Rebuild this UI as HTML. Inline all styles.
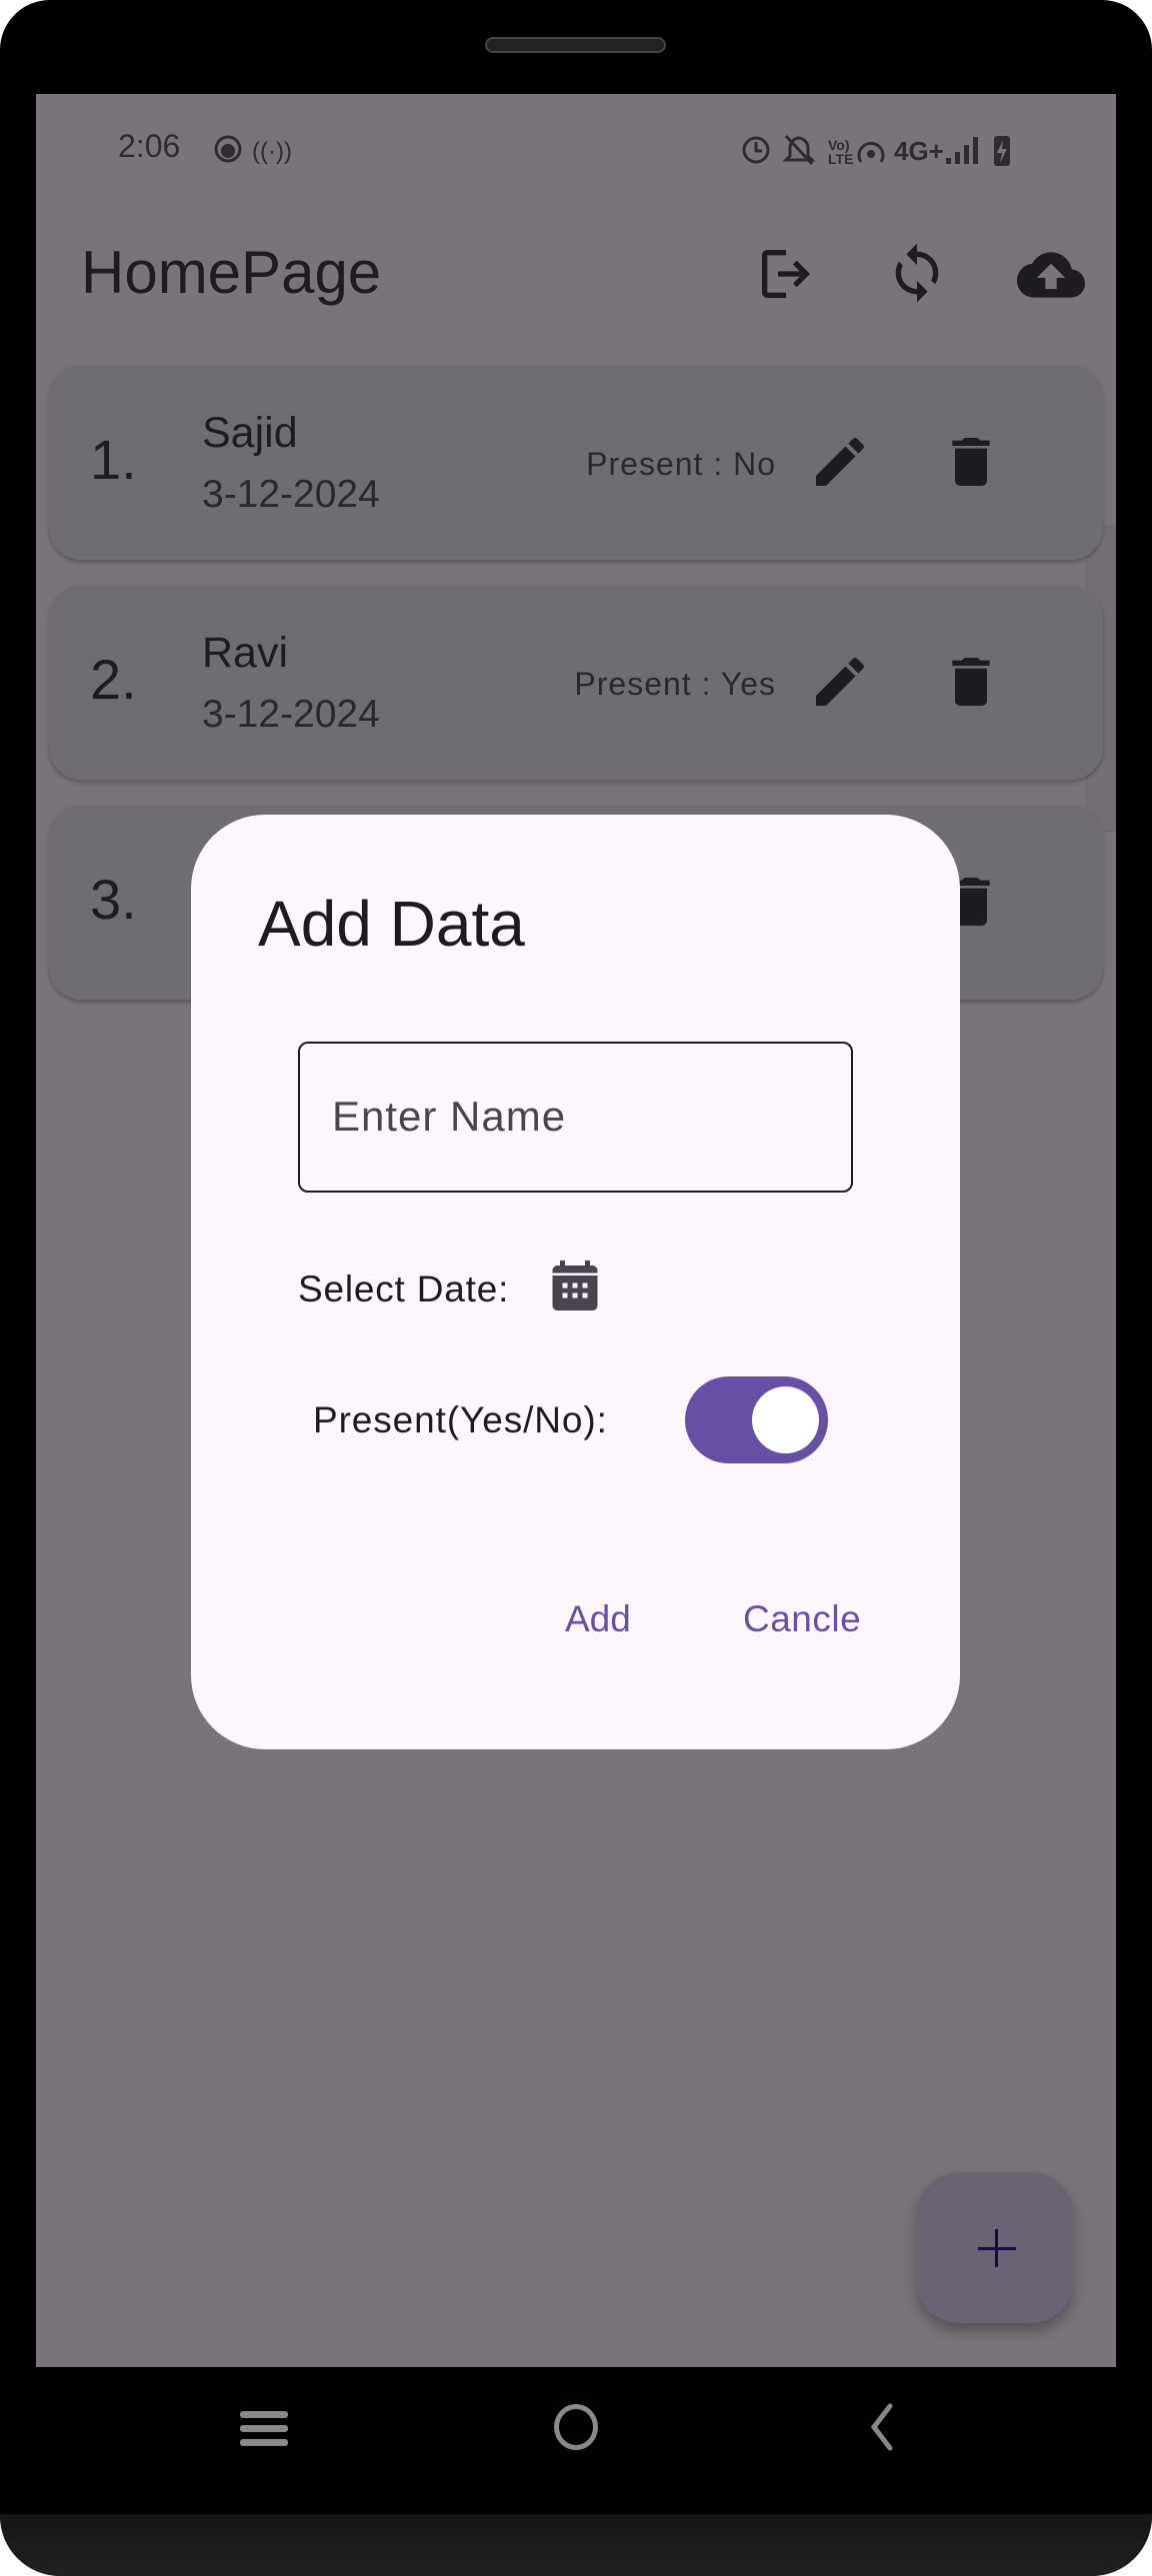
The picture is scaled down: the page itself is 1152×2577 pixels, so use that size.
<!DOCTYPE html>
<html><head><meta charset="utf-8"><style>
*{margin:0;padding:0;box-sizing:border-box}
body{width:1152px;height:2577px;background:#fff;font-family:"Liberation Sans",Roboto,sans-serif;position:relative;overflow:hidden}
.phone{position:absolute;left:0;top:0;width:1152px;height:2577px;background:#000;border-radius:50px 50px 60px 60px;overflow:hidden}
.chin{position:absolute;left:0;top:2515px;width:1152px;height:62px;background:linear-gradient(#141414,#222);border-radius:0 0 60px 60px}
.spk{position:absolute;left:485px;top:37px;width:181px;height:16px;border-radius:8px;background:#222;border:2px solid #444}
.screen{position:absolute;left:36px;top:94px;width:1080px;height:2274px;background:#79747a;overflow:hidden}
.a{position:absolute}
.card{position:absolute;left:13px;width:1054px;height:195px;background:#706d72;border-radius:33px;box-shadow:0 3px 4px rgba(0,0,0,.25)}
.num{position:absolute;left:41px;font-size:56px;color:#1e1c21}
.nm{position:absolute;left:153px;font-size:43px;color:#1e1c21}
.dt{position:absolute;left:153px;font-size:39px;color:#2a282d}
.pr{position:absolute;font-size:32px;color:#2a282d;letter-spacing:1px}
.dlg{position:absolute;left:191px;top:815px;width:769px;height:935px;background:#fdf7fd;border-radius:74px}
.t{position:absolute;white-space:nowrap}
</style></head><body>
<div class="phone">
<div class="spk"></div>
<div class="screen">
 <div class="t" style="left:82px;top:34px;font-size:32px;color:#2e2c30">2:06</div>
 <svg class="a" style="left:174px;top:38px" width="110" height="34"><circle cx="18" cy="17" r="12" fill="none" stroke="#2e2c30" stroke-width="3"/><circle cx="18" cy="19" r="7" fill="#2e2c30"/><text x="42" y="27" font-size="24" fill="#2e2c30" font-family="Liberation Sans">((·))</text></svg>
 <svg class="a" style="left:700px;top:34px" width="340" height="40" fill="#2e2c30" font-family="Liberation Sans">
  <circle cx="20" cy="22" r="12" fill="none" stroke="#2e2c30" stroke-width="3"/><path d="M20 14v9h6" stroke="#2e2c30" stroke-width="3" fill="none"/>
  <path d="M62 10a10 10 0 0 1 10 10v8l4 4H50l4-4v-8a10 10 0 0 1 8-10z" fill="none" stroke="#2e2c30" stroke-width="3"/><path d="M50 8l26 28" stroke="#2e2c30" stroke-width="3"/>
  <text x="92" y="22" font-size="14" font-weight="bold">Vo)</text><text x="92" y="36" font-size="14" font-weight="bold">LTE</text>
  <path d="M125 34a12 12 0 1 1 20 0" fill="none" stroke="#2e2c30" stroke-width="3"/><circle cx="135" cy="26" r="4"/>
  <text x="158" y="32" font-size="26" font-weight="bold">4G+</text>
  <rect x="210" y="30" width="5" height="6"/><rect x="219" y="24" width="5" height="12"/><rect x="228" y="17" width="5" height="19"/><rect x="237" y="9" width="5" height="27"/>
  <rect x="258" y="8" width="16" height="30" rx="3"/><path d="M267 12l-6 13h5l-2 10 7-14h-5z" fill="#79747a"/>
 </svg>
 <div class="t" style="left:45px;top:144px;font-size:60px;color:#1e1c21">HomePage</div>
 <svg class="a" style="left:718px;top:148px" width="64" height="64" viewBox="0 0 24 24" fill="#1e1c21"><path d="M5 21c-.55 0-1.02-.2-1.41-.59S3 19.55 3 19V5c0-.55.2-1.02.59-1.41S4.45 3 5 3h7v2H5v14h7v2H5zm11-4l-1.38-1.45 2.55-2.55H9v-2h8.17l-2.55-2.55L16 7l5 5-5 5z"/></svg>
 <svg class="a" style="left:849px;top:147px" width="64" height="64" viewBox="0 0 24 24" fill="#1e1c21"><path d="M12 4V1L8 5l4 4V6c3.31 0 6 2.69 6 6 0 1.01-.25 1.970-.7 2.8l1.46 1.46C19.54 15.03 20 13.570 20 12c0-4.42-3.58-8-8-8zm0 14c-3.31 0-6-2.69-6-6 0-1.01.25-1.97.7-2.8L5.24 7.74C4.46 8.97 4 10.43 4 12c0 4.42 3.58 8 8 8v3l4-4-4-4v3z"/></svg>
 <svg class="a" style="left:981px;top:147px" width="68" height="68" viewBox="0 0 24 24" fill="#1e1c21"><path d="M19.35 10.04C18.67 6.59 15.64 4 12 4 9.11 4 6.6 5.64 5.35 8.04 2.34 8.36 0 10.91 0 14c0 3.31 2.690 6 6 6h13c2.76 0 5-2.24 5-5 0-2.64-2.05-4.78-4.650-4.96zM14 13v4h-4v-4H7l5-5 5 5h-3z"/></svg>

 <div class="a" style="left:1050px;top:432px;width:30px;height:306px;border:1px solid #6c696e;border-right:none;border-radius:16px 0 0 16px;background:#736f75"></div>

 <div class="card" style="top:271px">
  <div class="num" style="top:62px">1.</div>
  <div class="nm" style="top:44px">Sajid</div>
  <div class="dt" style="top:108px">3-12-2024</div>
  <div class="pr" style="right:327px;top:81px">Present : No</div>
 </div>
 <div class="card" style="top:491px">
  <div class="num" style="top:62px">2.</div>
  <div class="nm" style="top:44px">Ravi</div>
  <div class="dt" style="top:108px">3-12-2024</div>
  <div class="pr" style="right:327px;top:81px">Present : Yes</div>
 </div>
 <div class="card" style="top:711px">
  <div class="num" style="top:62px">3.</div>
 </div>
 <svg class="a" style="left:772px;top:336px" width="64" height="64" viewBox="0 0 24 24" fill="#1e1c21"><path d="M3 17.25V21h3.75L17.81 9.94l-3.75-3.75L3 17.25zM20.71 7.04a1 1 0 0 0 0-1.41l-2.34-2.34a1 1 0 0 0-1.41 0l-1.83 1.830 3.75 3.75 1.83-1.83z"/></svg>
 <svg class="a" style="left:903px;top:336px" width="64" height="64" viewBox="0 0 24 24" fill="#1e1c21"><path d="M6 19c0 1.1.9 2 2 2h8c1.1 0 2-.9 2-2V7H6v12zM19 4h-3.5l-1-1h-5l-1 1H5v2h14V4z"/></svg>
 <svg class="a" style="left:772px;top:556px" width="64" height="64" viewBox="0 0 24 24" fill="#1e1c21"><path d="M3 17.25V21h3.75L17.81 9.94l-3.75-3.75L3 17.25zM20.71 7.04a1 1 0 0 0 0-1.41l-2.34-2.34a1 1 0 0 0-1.41 0l-1.83 1.83 3.75 3.75 1.83-1.83z"/></svg>
 <svg class="a" style="left:903px;top:556px" width="64" height="64" viewBox="0 0 24 24" fill="#1e1c21"><path d="M6 19c0 1.1.9 2 2 2h8c1.1 0 2-.9 2-2V7H6v12zM19 4h-3.5l-1-1h-5l-1 1H5v2h14V4z"/></svg>
 <svg class="a" style="left:903px;top:776px" width="64" height="64" viewBox="0 0 24 24" fill="#1e1c21"><path d="M6 19c0 1.1.9 2 2 2h8c1.1 0 2-.9 2-2V7H6v12zM19 4h-3.5l-1-1h-5l-1 1H5v2h14V4z"/></svg>

 <div class="a" style="left:881px;top:2079px;width:156px;height:151px;background:#6a6373;border-radius:42px;box-shadow:0 8px 14px rgba(0,0,0,.3)"></div>
 <div class="a" style="left:942px;top:2154px;width:38px;height:3px;background:#1b0a3d"></div>
 <div class="a" style="left:959px;top:2136px;width:3px;height:38px;background:#1b0a3d"></div>
</div>

<div class="dlg">
 <div class="t" style="left:67px;top:72px;font-size:64px;color:#1d1b20">Add Data</div>
 <div class="a" style="left:107px;top:227px;width:555px;height:151px;border:2.5px solid #1d1b20;border-radius:10px"></div>
 <div class="t" style="left:141px;top:278px;font-size:42px;color:#49454f;letter-spacing:1px">Enter Name</div>
 <div class="t" style="left:107px;top:454px;font-size:37px;color:#1d1b20;letter-spacing:.8px">Select Date:</div>
 <svg class="a" style="left:354px;top:441px" width="60" height="60" viewBox="0 0 24 24" fill="#49454f"><path d="M19 4h-1V2h-2v2H8V2H6v2H5c-1.1 0-2 .9-2 2v14c0 1.1.9 2 2 2h14c1.1 0 2-.9 2-2V6c0-1.1-.9-2-2-2z"/><rect x="7" y="11" width="2" height="2" fill="#fdf7fd"/><rect x="11" y="11" width="2" height="2" fill="#fdf7fd"/><rect x="15" y="11" width="2" height="2" fill="#fdf7fd"/><rect x="7" y="15" width="2" height="2" fill="#fdf7fd"/><rect x="11" y="15" width="2" height="2" fill="#fdf7fd"/><rect x="15" y="15" width="2" height="2" fill="#fdf7fd"/><rect x="3" y="7" width="18" height="1" fill="#fdf7fd"/></svg>
 <div class="t" style="left:122px;top:585px;font-size:37px;color:#1d1b20;letter-spacing:.9px">Present(Yes/No):</div>
 <div class="a" style="left:494px;top:562px;width:143px;height:87px;border-radius:44px;background:#6750a4"></div>
 <div class="a" style="left:561px;top:572px;width:67px;height:67px;border-radius:50%;background:#fff"></div>
 <div class="t" style="left:374px;top:784px;font-size:37px;color:#6750a4">Add</div>
 <div class="t" style="left:552px;top:784px;font-size:37px;color:#6750a4;letter-spacing:.5px">Cancle</div>
</div>

<div class="a" style="left:240px;top:2412px;width:48px;height:7px;border-radius:3px;background:#888"></div>
<div class="a" style="left:240px;top:2426px;width:48px;height:7px;border-radius:3px;background:#888"></div>
<div class="a" style="left:240px;top:2440px;width:48px;height:7px;border-radius:3px;background:#888"></div>
<div class="a" style="left:554px;top:2405px;width:44px;height:46px;border-radius:50%;border:5px solid #888"></div>
<svg class="a" style="left:866px;top:2404px" width="30" height="48"><path d="M24 3L8 24l16 21" fill="none" stroke="#888" stroke-width="5" stroke-linecap="round"/></svg>
<div class="chin"></div>
</div>
</body></html>
